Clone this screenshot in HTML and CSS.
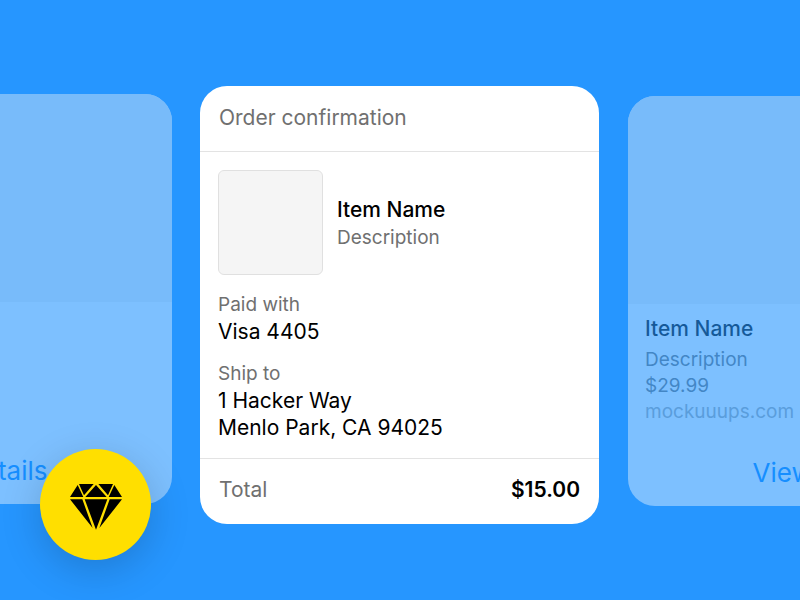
FILE: index.html
```html
<!DOCTYPE html>
<html lang="en">
<head>
<meta charset="utf-8">
<meta name="viewport" content="width=device-width, initial-scale=1">
<title>Order confirmation</title>
<link rel="stylesheet" href="styles.css">
</head>
<body>
<main class="stage">
  <article class="card product product-prev">
    <div class="product-image"></div>
    <a class="product-link" href="#">View Details</a>
  </article>

  <article class="card order">
    <h1 class="order-title">Order confirmation</h1>
    <div class="order-body">
      <div class="item">
        <div class="thumb"></div>
        <div class="item-text">
          <h2 class="name">Item Name</h2>
          <p class="label">Description</p>
        </div>
      </div>
      <dl class="details">
        <dt class="label">Paid with</dt>
        <dd class="value">Visa 4405</dd>
        <dt class="label">Ship to</dt>
        <dd class="value address">1 Hacker Way<br>Menlo Park, CA 94025</dd>
      </dl>
    </div>
    <footer class="total">
      <span class="total-label">Total</span>
      <strong class="total-value">$15.00</strong>
    </footer>
  </article>

  <article class="card product product-next">
    <div class="product-image"></div>
    <div class="product-text">
      <h2 class="name">Item Name</h2>
      <p class="label">Description</p>
      <p class="label">$29.99</p>
      <p class="label site">mockuuups.com</p>
    </div>
    <a class="product-link" href="#">View Details</a>
  </article>
</main>

<div class="badge">
  <svg class="gem" viewBox="30 27 156 138" aria-hidden="true">
    <path d="M30 66 53 30 70 66Z M57 27H101L72 61Z M108 30 140 66H76Z M115 27H159L144 61Z M163 30 186 66H146Z M30 73H67L98 159Z M74 73H142L108 164Z M149 73H186L118 159Z"/>
  </svg>
</div>
</body>
</html>
```
FILE: styles.css
```css
* {
  box-sizing: border-box;
}

body {
  margin: 0;
  background: #2696ff;
  color: #000;
  font-family: Inter, "Liberation Sans", sans-serif;
  font-size: 21px;
  line-height: 28px;
  overflow: hidden;
}

h1, h2, p, dl, dd {
  margin: 0;
}

.stage {
  display: grid;
  grid-template-columns: repeat(3, 400px);
  gap: 28px;
  justify-content: center;
  align-items: start;
  min-height: 100vh;
  padding-top: 86px;
}

.card {
  border-radius: 27px;
  background: #fff;
  overflow: hidden;
}

.order {
  margin-right: 1px;
}

.order-title {
  padding: 18px 19px 19px;
  border-bottom: 1px solid #e3e3e3;
  color: #707070;
  font-size: 21px;
  font-weight: 400;
}

.order-body {
  padding: 18px 18px 17px;
}

.item {
  display: flex;
  align-items: center;
  gap: 14px;
}

.item-text {
  padding-top: 3px;
}

.thumb {
  width: 105px;
  height: 105px;
  border: 1px solid #e0e0e0;
  border-radius: 6px;
  background: #f5f5f5;
}

.name {
  font-size: 21px;
  font-weight: 500;
}

.label {
  color: #707070;
  font-size: 19px;
}

.details {
  padding-top: 17px;
}

.details .label {
  line-height: 26px;
}

.value {
  line-height: 27px;
}

.value + .label {
  padding-top: 16px;
}

.total {
  display: flex;
  justify-content: space-between;
  padding: 17px 19px 20px;
  border-top: 1px solid #e3e3e3;
}

.total-label {
  color: #707070;
}

.total-value {
  font-weight: 600;
}

.product {
  display: flex;
  flex-direction: column;
  min-height: 410px;
  opacity: 0.4;
}

.product-prev {
  margin-top: 8px;
}

.product-next {
  margin-top: 10px;
}

.product-image {
  height: 208px;
  background: #f3f3f5;
}

.product-text {
  padding: 11px 17px;
}

.product-text .name {
  margin-bottom: 4px;
}

.product-text .label {
  line-height: 26px;
}

.product-text .site {
  color: #a8a8a8;
}

.product-link {
  margin-top: auto;
  padding-bottom: 19px;
  color: #0084ff;
  font-size: 26px;
  text-align: center;
  text-decoration: none;
}

.badge {
  position: absolute;
  left: 40px;
  bottom: 40px;
  display: grid;
  place-items: center;
  width: 111px;
  height: 111px;
  padding-top: 4px;
  border-radius: 50%;
  background: #ffdf00;
  box-shadow: 0 10px 40px rgba(0, 0, 0, 0.18);
}

.gem {
  width: 52px;
  height: 46px;
}
```
